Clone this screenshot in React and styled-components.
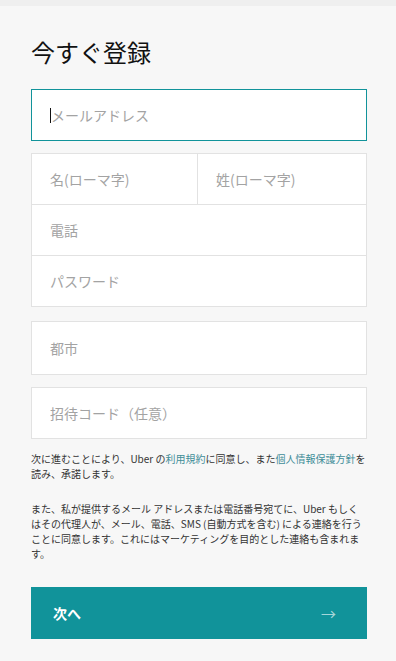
import React from "react";
import styled, { createGlobalStyle } from "styled-components";

const Global = createGlobalStyle`
  html, body { margin: 0; padding: 0; background: #f7f7f7; }
  body { font-family: "Noto Sans CJK JP", "Noto Sans", sans-serif; color: #333; }
  * { box-sizing: border-box; }
`;

const TopStrip = styled.div`
  height: 6px;
  background: #efefef;
`;

const Page = styled.main`
  padding: 30px 29px 22px 31px;
  display: flex;
  flex-direction: column;
`;

const Title = styled.h1`
  margin: 0;
  font-size: 24px;
  line-height: 32px;
  font-weight: 400;
  color: #111;
`;

const FieldBox = styled.label`
  display: flex;
  align-items: center;
  height: ${(p) => p.$h || 52}px;
  background: #fff;
  border: 1px solid ${(p) => (p.$focused ? "#11939a" : "#e2e2e2")};
  padding-left: 18px;
  margin-top: ${(p) => p.$mt || 0}px;
`;

const Caret = styled.span`
  width: 1px;
  height: 15px;
  background: #111;
  flex: none;
`;

const Input = styled.input`
  flex: 1;
  min-width: 0;
  border: none;
  outline: none;
  background: transparent;
  font-family: inherit;
  font-size: 14px;
  color: #333;
  padding: 0;
  caret-color: transparent;
  &::placeholder { color: #a3a3a3; }
`;

const Group = styled.div`
  margin-top: 12px;
  background: #fff;
  border: 1px solid #e2e2e2;
  display: flex;
  flex-direction: column;
`;

const Row = styled.div`
  display: grid;
  grid-template-columns: ${(p) => (p.$split ? "166px 1fr" : "1fr")};
  height: ${(p) => (p.$last ? 50 : 51)}px;
  border-bottom: ${(p) => (p.$last ? "none" : "1px solid #e2e2e2")};
`;

const Cell = styled.label`
  display: flex;
  align-items: center;
  padding-left: 18px;
  border-right: ${(p) => (p.$divider ? "1px solid #e2e2e2" : "none")};
`;

const Legal = styled.p`
  margin: ${(p) => p.$mt}px 0 0;
  font-size: 10px;
  line-height: 15px;
  color: #333;
`;

const Link = styled.a`
  color: #3f8d98;
  text-decoration: none;
`;

const NextButton = styled.button`
  margin-top: 26px;
  height: 52px;
  border: none;
  background: #11939a;
  color: #fff;
  display: flex;
  align-items: center;
  justify-content: space-between;
  padding: 0 31px 0 22px;
  font-family: inherit;
  font-size: 14px;
  font-weight: 700;
  cursor: pointer;
`;

const Arrow = styled.span`
  font-size: 15px;
  font-weight: 400;
  color: rgba(255, 255, 255, 0.65);
`;

export default function App() {
  return (
    <>
      <Global />
      <TopStrip />
      <Page>
        <Title>今すぐ登録</Title>
        <FieldBox $focused $mt={21}>
          <Caret />
          <Input placeholder="メールアドレス" />
        </FieldBox>
        <Group>
          <Row $split>
            <Cell $divider>
              <Input placeholder="名(ローマ字)" />
            </Cell>
            <Cell>
              <Input placeholder="姓(ローマ字)" />
            </Cell>
          </Row>
          <Row>
            <Cell>
              <Input placeholder="電話" />
            </Cell>
          </Row>
          <Row $last>
            <Cell>
              <Input type="password" placeholder="パスワード" />
            </Cell>
          </Row>
        </Group>
        <FieldBox $h={54} $mt={14}>
          <Input placeholder="都市" />
        </FieldBox>
        <FieldBox $h={52} $mt={12}>
          <Input placeholder="招待コード（任意）" />
        </FieldBox>
        <Legal $mt={12}>
          次に進むことにより、Uber の<Link href="#">利用規約</Link>に同意し、また<Link href="#">個人情報保護方針</Link>を読み、承諾します。
        </Legal>
        <Legal $mt={20}>
          また、私が提供するメール アドレスまたは電話番号宛てに、Uber もしくはその代理人が、メール、電話、SMS (自動方式を含む) による連絡を行うことに同意します。これにはマーケティングを目的とした連絡も含まれます。
        </Legal>
        <NextButton>
          次へ
          <Arrow>→</Arrow>
        </NextButton>
      </Page>
    </>
  );
}
